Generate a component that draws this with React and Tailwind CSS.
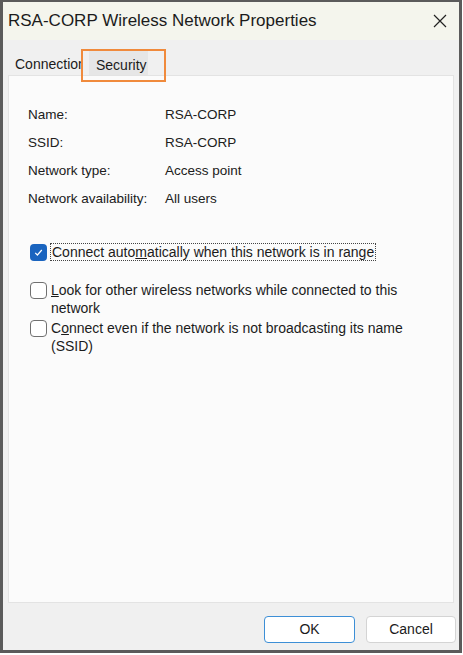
import React, { useState } from 'react';

const FIELDS = [
  ['Name:', 'RSA-CORP'],
  ['SSID:', 'RSA-CORP'],
  ['Network type:', 'Access point'],
  ['Network availability:', 'All users'],
];

const Box = ({ checked, onClick }) => (
  <button
    type="button"
    onClick={onClick}
    className={
      checked
        ? 'mt-[1px] w-[17px] h-[17px] shrink-0 rounded-[4px] bg-[#1a64bf] flex items-center justify-center'
        : 'mt-[1px] w-[17px] h-[17px] shrink-0 rounded-[4px] border border-[#707070] bg-white'
    }
  >
    {checked && (
      <svg width="11" height="11" viewBox="0 0 11 11">
        <path d="M2.2 5.8 L4.4 8 L8.8 3" fill="none" stroke="white" strokeWidth="1.2" />
      </svg>
    )}
  </button>
);

export default function App() {
  const [opts, setOpts] = useState([true, false, false]);
  const toggle = (i) => setOpts(opts.map((v, j) => (j === i ? !v : v)));

  return (
    <div
      className="w-[463px] h-[655px] bg-white"
      style={{ fontFamily: '"Liberation Sans", Arial, sans-serif' }}
    >
      <div className="w-[462px] h-[653px] border-[3px] border-t-2 border-[#5b5b5b] bg-[#f0f0f0] flex flex-col relative">
        {/* title bar */}
        <div className="h-[38px] bg-[#f4f5ed] flex items-center justify-between pl-[5px] pr-[12px]">
          <span className="text-[17px] text-[#1b1b1b]">RSA-CORP Wireless Network Properties</span>
          <svg width="14" height="14" viewBox="0 0 14 14">
            <path d="M1 1 L13 13 M13 1 L1 13" stroke="#222" strokeWidth="1.2" />
          </svg>
        </div>

        {/* tabs */}
        <div className="h-[35px] flex items-end pl-[5px] text-[14px] text-[#1b1b1b]">
          <div className="h-[24px] w-[73px] pl-[7px] pt-[3px] overflow-hidden whitespace-nowrap">Connection</div>
          <div className="h-[24px] w-[59px] bg-[#e6e6e6] pl-[7px] pt-[4px] ml-[8px]">Security</div>
        </div>
        <div className="absolute left-[78px] top-[47px] w-[85px] h-[33px] border-2 border-[#f08a3c]" />

        {/* panel */}
        <div className="mx-[5px] w-[446px] h-[528px] bg-[#fbfbfb] border border-[#e3e3e3] pt-[25px] pl-[19px]">
          <div className="text-[13.5px] text-[#202020]">
            {FIELDS.map(([k, v]) => (
              <div key={k} className="flex h-[28px] items-center">
                <span className="w-[137px]">{k}</span>
                <span>{v}</span>
              </div>
            ))}
          </div>

          <div className="mt-[30px] pl-[2px] text-[14px] text-[#1b1b1b] leading-[18px]">
            <div className="flex gap-[3px] items-start">
              <Box checked={opts[0]} onClick={() => toggle(0)} />
              <span className="border border-dotted border-[#444] px-[1px] leading-[16px]">
                Connect auto<u>m</u>atically when this network is in range
              </span>
            </div>
            <div className="flex gap-[4px] items-start mt-[20px]">
              <Box checked={opts[1]} onClick={() => toggle(1)} />
              <span className="w-[360px]">
                <u>L</u>ook for other wireless networks while connected to this network
              </span>
            </div>
            <div className="flex gap-[4px] items-start mt-[2px]">
              <Box checked={opts[2]} onClick={() => toggle(2)} />
              <span className="w-[360px]">
                C<u>o</u>nnect even if the network is not broadcasting its name (SSID)
              </span>
            </div>
          </div>
        </div>

        {/* footer */}
        <div className="flex justify-end gap-[11px] pt-[13px] pr-[3px] text-[14px] text-[#1b1b1b]">
          <button className="w-[91px] h-[27px] bg-white border border-[#3d8fd6] rounded-[4px]">OK</button>
          <button className="w-[90px] h-[27px] bg-white border border-[#d4d4d4] rounded-[4px]">Cancel</button>
        </div>
      </div>
    </div>
  );
}
